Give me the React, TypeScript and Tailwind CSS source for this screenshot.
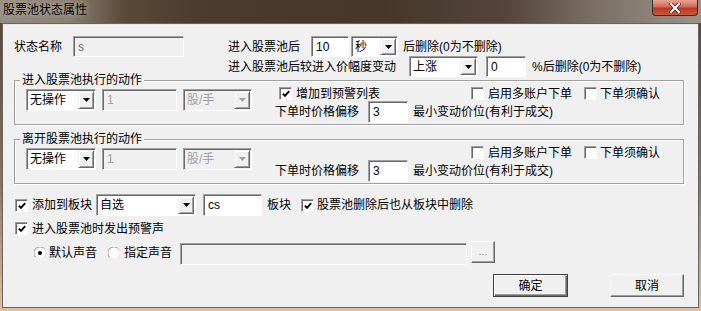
import React from "react";

const sunken =
  "border border-t-[#a0a0a0] border-l-[#a0a0a0] border-r-white border-b-white shadow-[inset_1px_1px_0_#696969]";
const raised =
  "border border-t-[#f0f0f0] border-l-[#f0f0f0] border-r-[#696969] border-b-[#696969] shadow-[inset_1px_1px_0_white,inset_-1px_-1px_0_#a0a0a0]";

function TextBox({
  value,
  className = "",
  disabled = false,
  readOnly = false,
}: {
  value: string;
  className?: string;
  disabled?: boolean;
  readOnly?: boolean;
}) {
  const tone = disabled
    ? "bg-[#f0f0f0] text-[#a0a0a0]"
    : readOnly
      ? "bg-[#f0f0f0] text-[#6d6d6d]"
      : "bg-white text-black";
  return (
    <div className={`flex h-[21px] shrink-0 items-center pl-[4px] ${sunken} ${tone} ${className}`}>
      {value}
    </div>
  );
}

function Combo({
  value,
  className = "",
  disabled = false,
}: {
  value: string;
  className?: string;
  disabled?: boolean;
}) {
  return (
    <div
      className={`flex h-[21px] shrink-0 items-stretch ${sunken} ${
        disabled ? "bg-[#f0f0f0] text-[#a0a0a0]" : "bg-white text-black"
      } ${className}`}
    >
      <span className="flex flex-1 items-center pl-[3px]">{value}</span>
      <span className={`my-[1px] mr-[1px] flex w-[16px] items-center justify-center bg-[#f0f0f0] ${raised}`}>
        <svg width="7" height="4" viewBox="0 0 7 4">
          <path d="M0 0h7L3.5 4z" fill={disabled ? "#a0a0a0" : "#000"} />
        </svg>
      </span>
    </div>
  );
}

function Check({ checked = false, className = "" }: { checked?: boolean; className?: string }) {
  return (
    <span
      className={`relative inline-block h-[13px] w-[13px] shrink-0 bg-white ${sunken} ${className}`}
    >
      {checked && (
        <svg className="absolute left-[2px] top-[2px]" width="8" height="8" viewBox="0 0 8 8">
          <path d="M0.8 3.6 L3 5.8 L7.2 1.2" stroke="#000" strokeWidth="1.9" fill="none" />
        </svg>
      )}
    </span>
  );
}

function Radio({ checked = false, className = "" }: { checked?: boolean; className?: string }) {
  return (
    <svg className={`shrink-0 ${className}`} width="12" height="12" viewBox="0 0 12 12">
      <circle cx="6" cy="6" r="5.5" fill="#fff" />
      <path d="M1.6 10.4 A5.5 5.5 0 0 1 10.4 1.6" stroke="#8a8a8a" fill="none" />
      <path d="M10.4 1.6 A5.5 5.5 0 0 1 1.6 10.4" stroke="#e3e3e3" fill="none" />
      {checked && <circle cx="6" cy="6" r="2" fill="#000" />}
    </svg>
  );
}

function Btn({
  children,
  className = "",
  primary = false,
}: {
  children: React.ReactNode;
  className?: string;
  primary?: boolean;
}) {
  return (
    <div
      className={`flex h-[23px] shrink-0 items-center justify-center bg-[#f0f0f0] text-black ${
        primary
          ? "border border-[#404040] shadow-[inset_1px_1px_0_white,inset_-1px_-1px_0_#696969,inset_-2px_-2px_0_#a0a0a0]"
          : "border border-t-white border-l-white border-r-[#696969] border-b-[#696969] shadow-[inset_-1px_-1px_0_#a0a0a0]"
      } ${className}`}
    >
      {children}
    </div>
  );
}

function ActionGroup({
  title,
  alert,
  className = "",
}: {
  title: string;
  alert?: boolean;
  className?: string;
}) {
  return (
    <fieldset
      className={`w-[670px] border border-[#a0a0a0] pb-[1px] shadow-[1px_1px_0_white,inset_1px_1px_0_white] ${className}`}
    >
      <legend className="ml-[5px] bg-[#f0f0f0] px-[2px] leading-[14px]">{title}</legend>
      <div className="flex">
        <div className="ml-[11px] mt-[2px] flex h-[22px] items-center">
          <Combo value="无操作" className="h-[22px] w-[70px]" />
          <TextBox value="1" disabled className="ml-[6px] h-[22px] w-[75px]" />
          <Combo value="股/手" disabled className="ml-[6px] h-[22px] w-[69px]" />
        </div>
        <div className="ml-[23px] flex flex-col">
          <div className="flex h-[13px] items-center">
            <div className="flex w-[196px] items-center">
              {alert && (
                <>
                  <Check checked className="ml-[4px]" />
                  <span className="ml-[4px]">增加到预警列表</span>
                </>
              )}
            </div>
            <div className="flex w-[113px] items-center">
              <Check />
              <span className="ml-[4px]">启用多账户下单</span>
            </div>
            <div className="flex items-center">
              <Check />
              <span className="ml-[3px]">下单须确认</span>
            </div>
          </div>
          <div className="mt-[1px] flex h-[22px] items-center">
            <span className="w-[93px]">下单时价格偏移</span>
            <TextBox value="3" className="h-[22px] w-[40px]" />
            <span className="ml-[5px]">最小变动价位(有利于成交)</span>
          </div>
        </div>
      </div>
    </fieldset>
  );
}

export default function App() {
  return (
    <div className="flex h-[311px] w-[701px] flex-col overflow-hidden font-['Liberation_Sans','Noto_Sans_CJK_SC',sans-serif] text-[12px] leading-[14px] text-black">
      {/* title bar */}
      <div className="flex h-[23px] shrink-0 items-start bg-[linear-gradient(to_right,#968c80_0%,#8a7e70_10%,#5a4838_18%,#4a3a2b_30%,#46372a_55%,#54443a_72%,#7c7064_85%,#9a9389_100%)]">
        <span className="ml-[3px] mt-[3px] text-[12px] leading-[14px] text-black [text-shadow:0_0_6px_rgba(255,255,255,0.55)]">
          股票池状态属性
        </span>
        <div className="ml-auto mr-[3px] flex h-[16px] w-[46px] items-center justify-center rounded-b-[4px] border border-t-0 border-[#3b2a20] bg-[linear-gradient(to_bottom,#e7a597,#d26a55_45%,#b8391f_55%,#c9583b)]">
          <svg width="12" height="10" viewBox="0 0 12 10">
            <path d="M2 1 L10 9 M10 1 L2 9" stroke="#4a2a20" strokeWidth="3.6" strokeLinecap="square" />
            <path d="M2 1 L10 9 M10 1 L2 9" stroke="#fff" strokeWidth="2" strokeLinecap="square" />
          </svg>
        </div>
      </div>

      {/* frame */}
      <div className="flex flex-1 bg-[linear-gradient(to_bottom,#5a4736,#8a7260_55%,#e0c0a0)] px-[2px] pb-[3px]">
        <div className="flex flex-1 flex-col border border-[#646464] bg-[#f0f0f0] pl-[11px] pt-[12px] shadow-[inset_0_1px_0_#e8e8e8]">
          {/* top rows */}
          <div className="flex">
            <div className="flex h-[21px] items-center">
              <span className="w-[59px]">状态名称</span>
              <TextBox value="s" readOnly className="w-[111px]" />
            </div>
            <div className="ml-[44px] flex flex-col">
              <div className="flex h-[21px] items-center">
                <span className="w-[83px]">进入股票池后</span>
                <TextBox value="10" className="w-[38px]" />
                <Combo value="秒" className="ml-[2px] w-[47px]" />
                <span className="ml-[5px]">后删除(0为不删除)</span>
              </div>
              <div className="-mt-[1px] flex h-[21px] items-center">
                <span className="w-[181px]">进入股票池后较进入价幅度变动</span>
                <Combo value="上涨" className="w-[69px]" />
                <TextBox value="0" className="ml-[8px] w-[40px]" />
                <span className="ml-[6px]">%后删除(0为不删除)</span>
              </div>
            </div>
          </div>

          <ActionGroup title="进入股票池执行的动作" alert className="-mt-[4px]" />
          <ActionGroup title="离开股票池执行的动作" className="mt-[7px]" />

          {/* block row */}
          <div className="mt-[10px] flex h-[22px] items-center">
            <Check checked className="ml-[1px]" />
            <span className="ml-[4px] w-[64px]">添加到板块</span>
            <Combo value="自选" className="h-[22px] w-[100px]" />
            <TextBox value="cs" className="ml-[7px] h-[22px] w-[59px]" />
            <span className="ml-[5px] w-[34px]">板块</span>
            <Check checked />
            <span className="ml-[3px]">股票池删除后也从板块中删除</span>
          </div>

          <div className="mt-[6px] flex h-[13px] items-center">
            <Check checked className="ml-[1px]" />
            <span className="ml-[4px]">进入股票池时发出预警声</span>
          </div>

          <div className="mt-[6px] flex h-[24px] items-center">
            <Radio checked className="ml-[20px]" />
            <span className="ml-[3px] w-[48px]">默认声音</span>
            <Radio className="ml-[11px]" />
            <span className="ml-[4px] w-[48px]">指定声音</span>
            <TextBox value="" disabled className="ml-[8px] h-[22px] w-[287px] self-end" />
            <div
              className={`ml-[4px] flex h-[22px] w-[24px] items-end justify-center self-start bg-[#f0f0f0] pb-[5px] text-[10px] leading-[10px] text-[#8a8a8a] border border-t-white border-l-white border-r-[#696969] border-b-[#696969] shadow-[inset_-1px_-1px_0_#a0a0a0]`}
            >
              ...
            </div>
          </div>

          <div className="mt-[9px] flex justify-end pr-[14px]">
            <Btn primary className="w-[75px]">确定</Btn>
            <Btn className="ml-[42px] w-[74px]">取消</Btn>
          </div>
        </div>
      </div>
    </div>
  );
}
